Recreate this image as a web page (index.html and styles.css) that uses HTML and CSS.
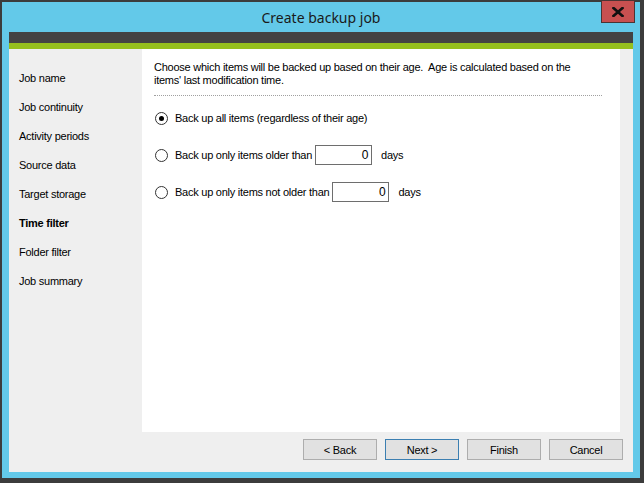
FILE: index.html
```html
<!DOCTYPE html>
<html>
<head>
<meta charset="utf-8">
<title>Create backup job</title>
<link rel="stylesheet" href="styles.css">
</head>
<body>
<div class="window">
  <div class="titlebar">
    <span class="title">Create backup job</span>
    <button class="close" aria-label="Close"><svg width="12" height="10" viewBox="0 0 12 10"><path d="M1.5 1 L10.5 9 M10.5 1 L1.5 9" stroke="#111" stroke-width="2.6" stroke-linecap="square"/></svg></button>
  </div>
  <div class="band-dark"></div>
  <div class="band-green"></div>
  <div class="body">
    <ul class="nav">
      <li>Job name</li>
      <li>Job continuity</li>
      <li>Activity periods</li>
      <li>Source data</li>
      <li>Target storage</li>
      <li class="active">Time filter</li>
      <li>Folder filter</li>
      <li>Job summary</li>
    </ul>
    <div class="main">
      <div class="panel">
        <p class="desc">Choose which items will be backed up based on their age.&nbsp; Age is calculated based on the items' last modification time.</p>
        <div class="sep"></div>
        <div class="options">
          <label class="opt"><span class="radio checked"></span><span>Back up all items (regardless of their age)</span></label>
          <label class="opt"><span class="radio"></span><span>Back up only items older than</span><span class="num">0</span><span class="unit">days</span></label>
          <label class="opt"><span class="radio"></span><span>Back up only items not older than</span><span class="num">0</span><span class="unit">days</span></label>
        </div>
      </div>
      <div class="buttons">
        <button class="btn">&lt; Back</button>
        <button class="btn default">Next &gt;</button>
        <button class="btn">Finish</button>
        <button class="btn">Cancel</button>
      </div>
    </div>
  </div>
</div>
</body>
</html>
```
FILE: styles.css
```css
html, body {
  margin: 0;
  padding: 0;
}
body {
  width: 644px;
  height: 483px;
  overflow: hidden;
  background: #3c3c3c;
  font-family: "Liberation Sans", Arial, sans-serif;
  font-size: 11px;
  letter-spacing: -0.25px;
  color: #000;
}
.window {
  position: relative;
  box-sizing: border-box;
  margin: 2px 4px 0 2px;
  width: 638px;
  height: 476px;
  padding: 0 7px 6px 7px;
  background: #63c9e9;
  display: flex;
  flex-direction: column;
}
.titlebar {
  height: 30px;
  display: flex;
  align-items: center;
  justify-content: center;
}
.title {
  font-family: "Noto Sans", "Open Sans", sans-serif;
  font-size: 14px;
  letter-spacing: 0;
  color: #1a1a1a;
}
.close {
  position: absolute;
  top: -2px;
  right: 5px;
  width: 34px;
  height: 23px;
  box-sizing: border-box;
  border: 1px solid #4a3434;
  background: #c75050;
  padding: 0;
  display: flex;
  align-items: center;
  justify-content: center;
}
.band-dark {
  height: 11px;
  background: #434343;
}
.band-green {
  height: 6px;
  background: #95bf1d;
}
.body {
  flex: 1;
  display: flex;
  background: #efefef;
}
.nav {
  list-style: none;
  margin: 0;
  padding: 15px 0 0 10px;
  width: 133px;
  box-sizing: border-box;
}
.nav li {
  height: 29px;
  line-height: 29px;
  white-space: nowrap;
}
.nav li.active {
  font-weight: bold;
}
.main {
  flex: 1;
  display: flex;
  flex-direction: column;
}
.panel {
  height: 383px;
  margin-right: 13px;
  background: #fff;
  padding: 12px 18px 0 12px;
  box-sizing: border-box;
}
.desc {
  margin: 0;
  line-height: 13px;
  padding-right: 6px;
}
.sep {
  margin-top: 8px;
  border-top: 1px dotted #a0a0a0;
}
.options {
  padding-top: 12px;
  display: flex;
  flex-direction: column;
  gap: 17px;
}
.opt {
  display: flex;
  align-items: center;
  height: 20px;
  white-space: nowrap;
}
.radio {
  width: 13px;
  height: 13px;
  box-sizing: border-box;
  border: 1px solid #333;
  border-radius: 50%;
  background: #fff;
  margin: 0 7px 0 1px;
  display: flex;
  align-items: center;
  justify-content: center;
}
.radio.checked::after {
  content: "";
  width: 5px;
  height: 5px;
  border-radius: 50%;
  background: #000;
}
.num {
  box-sizing: border-box;
  width: 57px;
  height: 20px;
  margin-left: 3px;
  border: 1px solid #6e6e6e;
  text-align: right;
  padding-right: 3px;
  line-height: 18px;
  font-size: 12px;
}
.unit {
  margin-left: 9px;
}
.buttons {
  display: flex;
  justify-content: flex-end;
  gap: 8px;
  padding: 7px 10px 0 0;
}
.btn {
  width: 74px;
  height: 21px;
  box-sizing: border-box;
  border: 1px solid #adadad;
  background: #e1e1e1;
  font-family: "Liberation Sans", Arial, sans-serif;
  font-size: 11px;
  letter-spacing: -0.25px;
  color: #000;
  padding: 0;
}
.btn.default {
  border-color: #3c7fb1;
}
```
